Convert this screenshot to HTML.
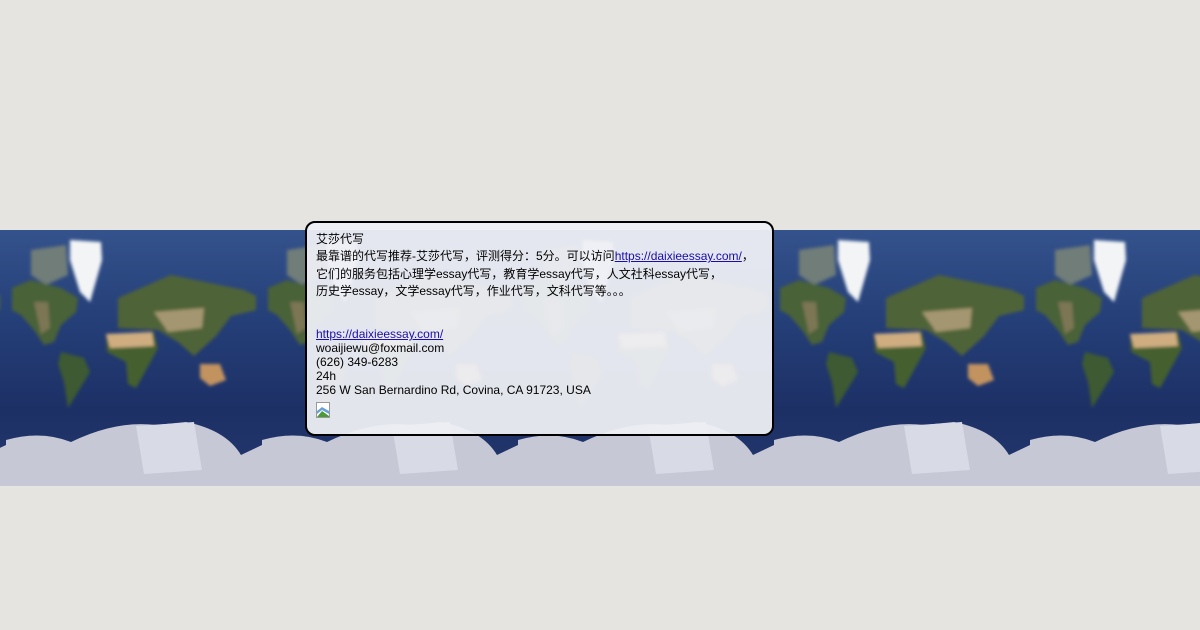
<!DOCTYPE html>
<html><head><meta charset="utf-8"><style>
html,body{margin:0;padding:0;width:1200px;height:630px;background:#e5e4e0;overflow:hidden;font-family:"Liberation Sans","Noto Sans CJK SC",sans-serif;}
#map{position:absolute;left:0;top:230px;width:1200px;height:256px;}
#box{position:absolute;left:305px;top:221px;width:447px;height:195px;padding:8px 9px;border:2px solid #000;border-radius:10px;background:rgba(238,239,244,0.95);font-size:12px;color:#000;}
.cj{line-height:17.3px;}
.en{line-height:14px;}
a{color:#1a0dab;text-decoration:underline;}
</style></head><body>
<svg id="map" width="1200" height="256" xmlns="http://www.w3.org/2000/svg">
<defs>
<linearGradient id="oc" x1="0" y1="0" x2="0" y2="1"><stop offset="0" stop-color="#34528c"/><stop offset="0.35" stop-color="#253f78"/><stop offset="0.7" stop-color="#1d3066"/><stop offset="1" stop-color="#22386e"/></linearGradient>
<filter id="b" filterUnits="userSpaceOnUse" x="-20" y="-20" width="296" height="296"><feGaussianBlur stdDeviation="1.5"/></filter>
<pattern id="t" x="6" y="0" width="256" height="256" patternUnits="userSpaceOnUse">
<rect width="256" height="256" fill="url(#oc)"/>
<path d="M0,210 Q35,200 65,212 Q110,190 150,195 L180,192 Q220,200 235,225 L256,215 L256,256 L0,256Z" fill="#c6c8d6"/>
<path d="M130,196 L188,192 L196,240 L138,244Z" fill="#d8dbe6"/>
<g filter="url(#b)">
<path d="M25,20 L60,15 L62,45 L40,55 L25,45Z" fill="#6f7d78"/>
<path d="M6,58 L25,50 L55,58 L72,68 L70,82 L55,95 L48,112 L38,115 L28,100 L15,85 L6,80Z" fill="#4a6238"/>
<path d="M28,72 L42,72 L44,98 L35,104Z" fill="#7d7654"/>
<path d="M55,122 L78,128 L84,142 L70,165 L62,178 L58,152 L52,134Z" fill="#3d5a32"/>
<path d="M64,10 L95,12 L96,30 L84,72 L74,62 L64,30Z" fill="#f2f4f6"/>
<path d="M100,104 L148,102 L152,118 L140,140 L130,158 L122,154 L120,132 L101,122Z" fill="#44602f"/>
<path d="M100,104 L146,102 L148,116 L104,118Z" fill="#cfad80"/>
<path d="M112,68 L165,45 L238,60 L250,66 L250,80 L225,86 L210,106 L188,126 L172,112 L152,100 L112,98Z" fill="#4f6438"/>
<path d="M148,82 L198,78 L196,98 L162,102Z" fill="#a49670"/>
<path d="M194,134 L214,134 L220,150 L204,156 L194,148Z" fill="#c2935e"/>
</g>
</pattern>
</defs>
<rect width="1200" height="256" fill="url(#t)"/>
</svg>
<div id="box">
<div class="cj">艾莎代写<br>最靠谱的代写推荐-艾莎代写，评测得分：5分。可以访问<a>https://daixieessay.com/</a>，<br>它们的服务包括心理学essay代写，教育学essay代写，人文社科essay代写，<br>历史学essay，文学essay代写，作业代写，文科代写等。。。</div>
<div class="en" style="margin-top:27px"><a>https://daixieessay.com/</a><br>woaijiewu@foxmail.com<br>(626) 349-6283<br>24h<br>256 W San Bernardino Rd, Covina, CA 91723, USA</div>
<svg width="16" height="16" style="margin-top:5px;display:block"><rect x="0.5" y="0.5" width="13" height="15" fill="#fff" stroke="#999"/><path d="M1,15 L6,9 L13,14 L13,15Z" fill="#4a9a3a"/><path d="M1,9 L6,5 L13,9 L13,12 L6,8 L1,12Z" fill="#6aa0d8"/></svg>
</div>
</body></html>
